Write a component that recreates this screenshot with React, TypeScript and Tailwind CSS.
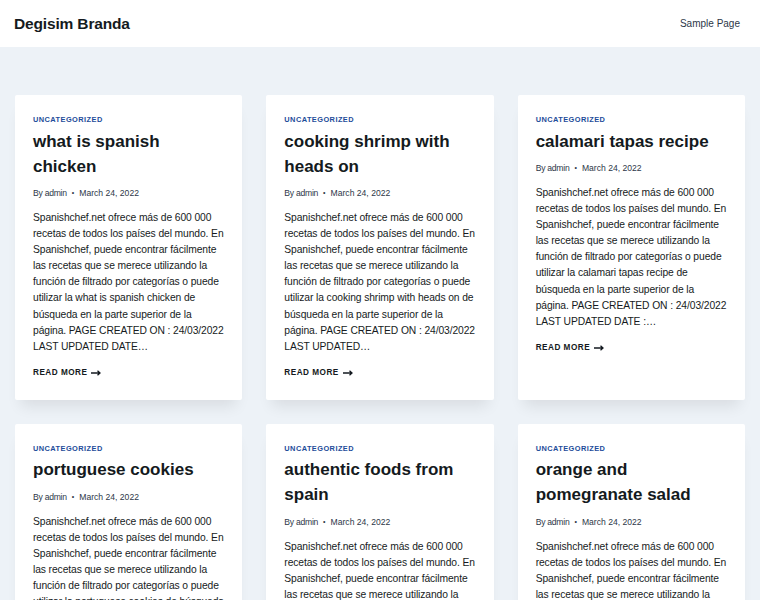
const posts = [
  {
    title: "what is spanish chicken",
    body: "Spanishchef.net ofrece más de 600 000 recetas de todos los países del mundo. En Spanishchef, puede encontrar fácilmente las recetas que se merece utilizando la función de filtrado por categorías o puede utilizar la what is spanish chicken de búsqueda en la parte superior de la página. PAGE CREATED ON : 24/03/2022 LAST UPDATED DATE…",
  },
  {
    title: "cooking shrimp with heads on",
    body: "Spanishchef.net ofrece más de 600 000 recetas de todos los países del mundo. En Spanishchef, puede encontrar fácilmente las recetas que se merece utilizando la función de filtrado por categorías o puede utilizar la cooking shrimp with heads on de búsqueda en la parte superior de la página. PAGE CREATED ON : 24/03/2022 LAST UPDATED…",
  },
  {
    title: "calamari tapas recipe",
    body: "Spanishchef.net ofrece más de 600 000 recetas de todos los países del mundo. En Spanishchef, puede encontrar fácilmente las recetas que se merece utilizando la función de filtrado por categorías o puede utilizar la calamari tapas recipe de búsqueda en la parte superior de la página. PAGE CREATED ON : 24/03/2022 LAST UPDATED DATE :…",
  },
  {
    title: "portuguese cookies",
    body: "Spanishchef.net ofrece más de 600 000 recetas de todos los países del mundo. En Spanishchef, puede encontrar fácilmente las recetas que se merece utilizando la función de filtrado por categorías o puede utilizar la portuguese cookies de búsqueda en la parte superior de la página. PAGE CREATED ON : 24/03/2022 LAST UPDATED DATE…",
  },
  {
    title: "authentic foods from spain",
    body: "Spanishchef.net ofrece más de 600 000 recetas de todos los países del mundo. En Spanishchef, puede encontrar fácilmente las recetas que se merece utilizando la función de filtrado por categorías o puede utilizar la authentic foods from spain de búsqueda en la parte superior de la página. PAGE CREATED ON : 24/03/2022 LAST UPDATED DATE…",
  },
  {
    title: "orange and pomegranate salad",
    body: "Spanishchef.net ofrece más de 600 000 recetas de todos los países del mundo. En Spanishchef, puede encontrar fácilmente las recetas que se merece utilizando la función de filtrado por categorías o puede utilizar la orange and pomegranate salad de búsqueda en la parte superior de la página. PAGE CREATED ON : 24/03/2022 LAST UPDATED DATE…",
  },
];

function PostCard({ title, body }: { title: string; body: string }) {
  return (
    <article className="bg-white rounded-[2px] shadow-[0_12px_14px_-6px_rgba(0,0,0,0.09)] pl-[18px] pr-[16px] pt-[19px] pb-[21px]">
      <div className="text-[7.4px] leading-[12px] font-bold tracking-[0.06em] uppercase text-[#1d4c9a]">
        Uncategorized
      </div>
      <h2 className="mt-[2.5px] text-[17px] leading-[25px] font-bold text-[#141a20]">{title}</h2>
      <div className="mt-[8.5px] flex items-center text-[8.6px] leading-[12px] text-[#2d3748]">
        <span className="tracking-[-0.03em]">By admin</span>
        <span className="mx-[5px] text-[7px]">•</span>
        <span>March 24, 2022</span>
      </div>
      <p className="mt-[11px] text-[10.3px] leading-[16.1px] tracking-[-0.1px] text-[#161b22]">{body}</p>
      <div className="mt-[12px] flex items-center gap-[4px] text-[8.2px] leading-[12px] font-bold tracking-[0.06em] uppercase text-[#141a20]">
        Read More
        <svg width="10" height="6" viewBox="0 0 10 6" fill="none" stroke="currentColor" strokeWidth="1.3">
          <path d="M0 3h9M6.5 0.7L9 3 6.5 5.3" />
        </svg>
      </div>
    </article>
  );
}

export default function App() {
  return (
    <div className="min-h-screen bg-[#edf2f7] font-['Liberation_Sans',Arial,sans-serif]">
      {/* Header */}
      <header className="bg-white h-[47px] flex items-center justify-between pl-[14px] pr-[20px]">
        <span className="text-[15.5px] font-bold text-[#141a20] tracking-[-0.01em]">Degisim Branda</span>
        <span className="text-[10px] text-[#2d3748]">Sample Page</span>
      </header>

      <main className="px-[15px] pt-[48px] pb-10">
        <div className="grid grid-cols-3 gap-[24px]">
          {posts.map((p) => (
            <PostCard key={p.title} title={p.title} body={p.body} />
          ))}
        </div>
      </main>
    </div>
  );
}
